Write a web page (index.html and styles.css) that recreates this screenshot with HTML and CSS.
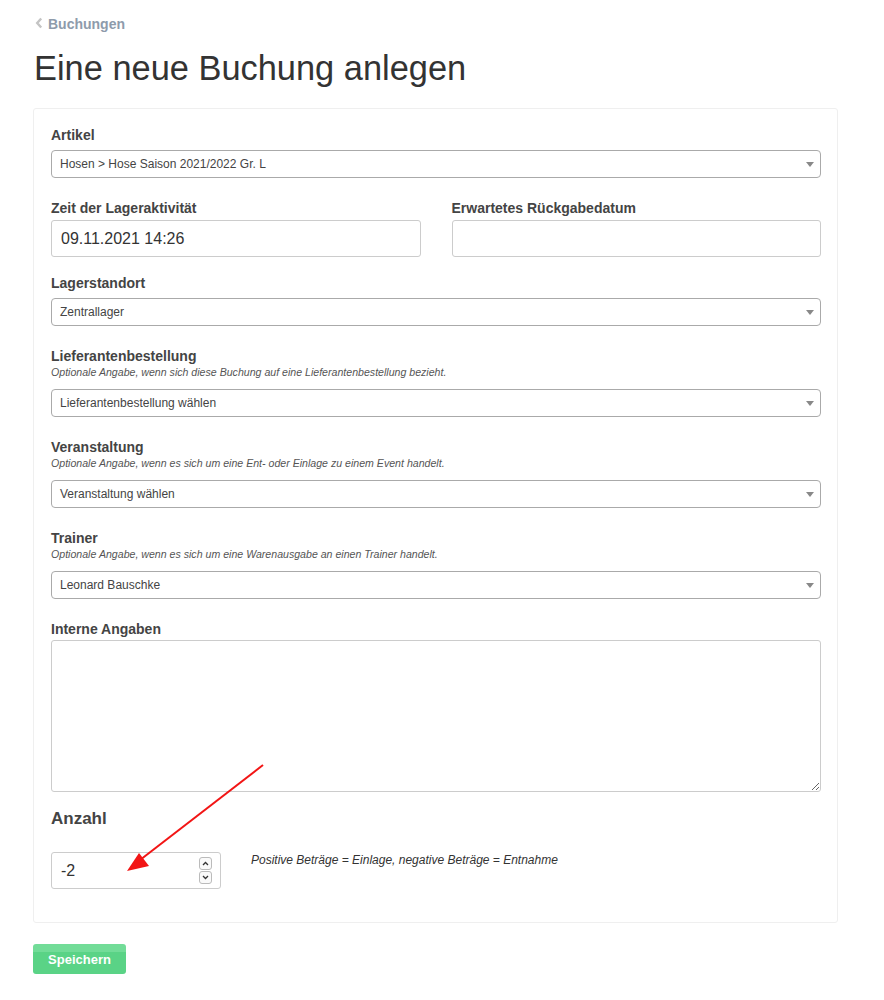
FILE: index.html
```html
<!DOCTYPE html>
<html lang="de">
<head>
    <meta charset="UTF-8">
    <title>Eine neue Buchung anlegen</title>
    <link rel="stylesheet" href="styles.css">
</head>
<body>
    <div class="page">
        <a class="back-link" href="#">
            <svg class="back-chevron" width="8" height="12" viewBox="0 0 8 12"><path d="M6.2 1.5 L2.2 6 L6.2 10.5" fill="none" stroke="#c4c4c4" stroke-width="2.4"/></svg>
            Buchungen
        </a>
        <h1>Eine neue Buchung anlegen</h1>

        <div class="panel">
            <div class="form-group">
                <label>Artikel</label>
                <div class="select-box">Hosen &gt; Hose Saison 2021/2022 Gr. L<span class="caret"></span></div>
            </div>

            <div class="form-row">
                <div class="form-group date-group">
                    <label>Zeit der Lageraktivität</label>
                    <div class="text-input">09.11.2021 14:26</div>
                </div>
                <div class="form-group date-group">
                    <label>Erwartetes Rückgabedatum</label>
                    <div class="text-input"></div>
                </div>
            </div>

            <div class="form-group">
                <label>Lagerstandort</label>
                <div class="select-box">Zentrallager<span class="caret"></span></div>
            </div>

            <div class="form-group">
                <label>Lieferantenbestellung</label>
                <p class="help">Optionale Angabe, wenn sich diese Buchung auf eine Lieferantenbestellung bezieht.</p>
                <div class="select-box">Lieferantenbestellung wählen<span class="caret"></span></div>
            </div>

            <div class="form-group">
                <label>Veranstaltung</label>
                <p class="help">Optionale Angabe, wenn es sich um eine Ent- oder Einlage zu einem Event handelt.</p>
                <div class="select-box">Veranstaltung wählen<span class="caret"></span></div>
            </div>

            <div class="form-group">
                <label>Trainer</label>
                <p class="help">Optionale Angabe, wenn es sich um eine Warenausgabe an einen Trainer handelt.</p>
                <div class="select-box">Leonard Bauschke<span class="caret"></span></div>
            </div>

            <div class="form-group notes-group">
                <label>Interne Angaben</label>
                <textarea class="notes"></textarea>
            </div>

            <div class="amount-group">
                <h3>Anzahl</h3>
                <div class="amount-row">
                    <div class="text-input number-input">
                        -2
                        <div class="spinner">
                            <span class="spin-btn"><svg width="7" height="5" viewBox="0 0 7 5"><path d="M1 4 L3.5 1.5 L6 4" fill="none" stroke="#333" stroke-width="1.3"/></svg></span>
                            <span class="spin-btn"><svg width="7" height="5" viewBox="0 0 7 5"><path d="M1 1 L3.5 3.5 L6 1" fill="none" stroke="#333" stroke-width="1.3"/></svg></span>
                        </div>
                    </div>
                    <p class="amount-help">Positive Beträge = Einlage, negative Beträge = Entnahme</p>
                </div>
            </div>
        </div>

        <button class="save-btn">Speichern</button>
    </div>

    <!-- annotation arrow -->
    <svg class="annotation" width="884" height="1000" viewBox="0 0 884 1000">
        <line x1="263" y1="765" x2="140" y2="860" stroke="#f21515" stroke-width="2"/>
        <polygon points="127,871 139,853 149,866" fill="#f21515"/>
    </svg>
</body>
</html>
```

FILE: styles.css
```css
* {
    box-sizing: border-box;
    margin: 0;
    padding: 0;
}

body {
    font-family: "Liberation Sans", Arial, Helvetica, sans-serif;
    background-color: #fff;
    color: #333;
    position: relative;
}

.page {
    padding: 14px 46px 0 33px;
}

.back-link {
    display: inline-flex;
    align-items: center;
    gap: 5px;
    margin-left: 2px;
    font-size: 14px;
    font-weight: bold;
    color: #8e9bab;
    text-decoration: none;
    height: 20px;
}

.back-chevron {
    margin-top: -2px;
}

h1 {
    font-size: 34.4px;
    font-weight: normal;
    color: #333;
    margin: 14px 0 0 1px;
    line-height: 40px;
}

.panel {
    margin-top: 20px;
    border: 1px solid #efefef;
    border-radius: 3px;
    padding: 16px 16px 33px 17px;
}

.form-group {
    margin-bottom: 20px;
}

.form-group label {
    display: block;
    font-size: 14px;
    font-weight: bold;
    color: #444;
    line-height: 20px;
    margin-bottom: 5px;
}

.help {
    font-size: 10.6px;
    font-style: italic;
    color: #555;
    line-height: 13px;
    margin-top: -5px;
    margin-bottom: 10px;
}

.select-box {
    position: relative;
    height: 28px;
    border: 1px solid #aaa;
    border-radius: 4px;
    font-size: 12px;
    color: #444;
    line-height: 26px;
    padding-left: 8px;
}

.caret {
    position: absolute;
    right: 6px;
    top: 11px;
    border-left: 4px solid transparent;
    border-right: 4px solid transparent;
    border-top: 5px solid #888;
}

.form-row {
    display: grid;
    grid-template-columns: 1fr 1fr;
    column-gap: 31px;
}

.date-group {
    margin-bottom: 16px;
}

.date-group label {
    margin-bottom: 2px;
}

.text-input {
    height: 37px;
    border: 1px solid #ccc;
    border-radius: 3px;
    font-size: 16px;
    color: #333;
    line-height: 35px;
    padding-left: 9px;
}

.notes-group label {
    margin-bottom: 1px;
}

.notes {
    display: block;
    width: 100%;
    height: 152px;
    border: 1px solid #ccc;
    border-radius: 3px;
    resize: both;
    font-family: inherit;
}

.amount-group h3 {
    font-size: 17px;
    font-weight: bold;
    color: #444;
    line-height: 20px;
    margin-top: -3px;
    margin-bottom: 23px;
}

.amount-row {
    display: flex;
    align-items: flex-start;
    gap: 30px;
}

.number-input {
    position: relative;
    width: 170px;
}

.spinner {
    position: absolute;
    right: 8px;
    top: 4px;
    display: flex;
    flex-direction: column;
    gap: 1px;
}

.spin-btn {
    display: flex;
    align-items: center;
    justify-content: center;
    width: 13px;
    height: 13px;
    border: 1px solid #bbb;
    border-radius: 3px;
    background: #fafafa;
}

.amount-help {
    font-size: 12px;
    font-style: italic;
    color: #333;
    line-height: 14px;
    margin-top: 1px;
}

.save-btn {
    margin-top: 21px;
    width: 93px;
    height: 30px;
    border: none;
    border-radius: 3px;
    background: linear-gradient(#72dc98 0, #72dc98 25%, #5ad386 25%, #5ad386 100%);
    color: #fff;
    font-family: inherit;
    font-size: 13px;
    font-weight: bold;
}

.annotation {
    position: absolute;
    top: 0;
    left: 0;
    pointer-events: none;
}
```
